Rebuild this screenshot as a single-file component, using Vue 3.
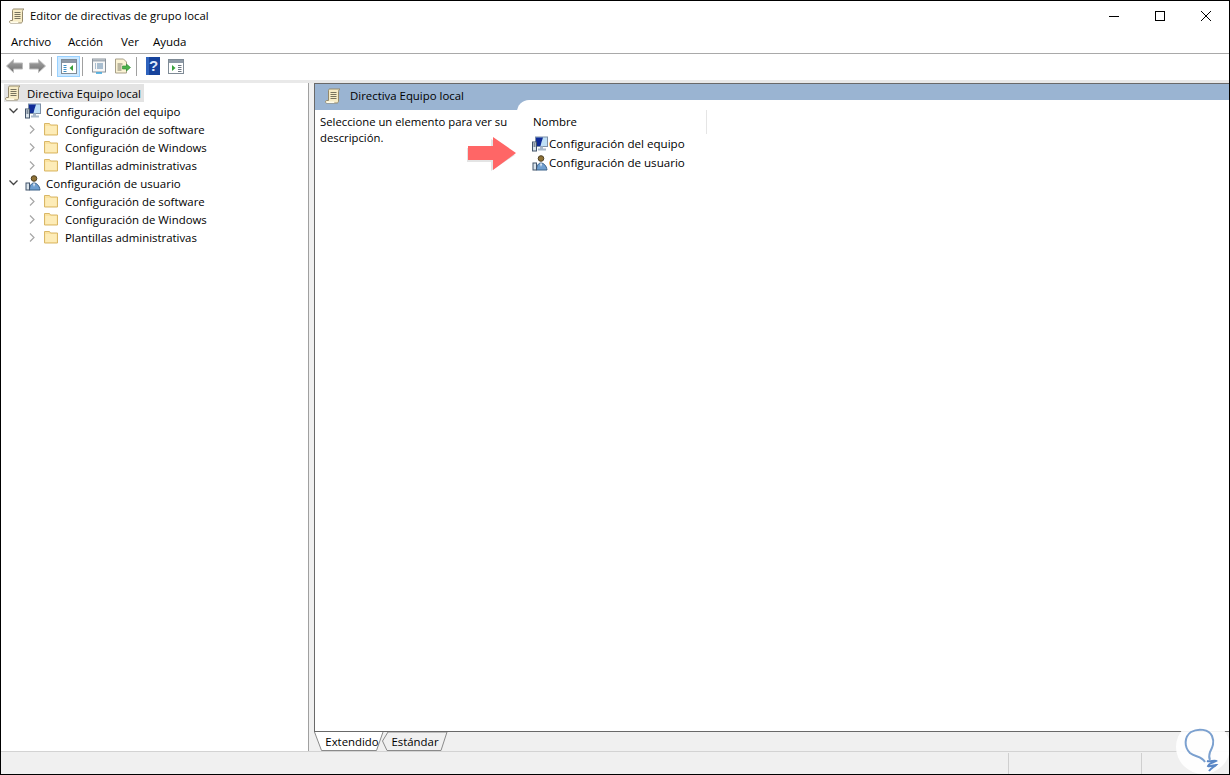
<template>
  <div class="window">
    <svg class="defs" width="0" height="0">
      <defs>
        <linearGradient id="arrow-fill" x1="0" y1="0" x2="0" y2="1">
          <stop offset="0" stop-color="#a9a9a9" />
          <stop offset="1" stop-color="#6e6e6e" />
        </linearGradient>
        <symbol id="scroll" viewBox="0 0 16 16">
          <path d="M4.500 1h10.500c-.8.600-1.500 1.500-1.500 2.500V13c0 1-.6 2-1.500 2H1.800C.8 15 .5 14.300.5 13.700c0-.8.700-1.200 1.500-1.200h1.500V3c0-1 .3-2 1-2z" fill="#f7ecc6" stroke="#94896c" />
          <path d="M1.500 13.500h7.500c0 .5.200 1 .5 1.500H2c-.8 0-1-1-.5-1.500z" fill="#fffbe9" />
          <path d="M5.500 4.500h6M5.500 6.500h6M5.500 8.500h6M5.500 10.500h6" stroke="#77735f" />
        </symbol>
        <symbol id="computer" viewBox="0 0 16 16">
          <rect x="3.500" y="1" width="12" height="9.500" fill="#bfe0f7" stroke="#7d8fa6" />
          <path d="M4 1.500h7L9.500 6 8.500 10H4z" fill="#0f2b97" />
          <path d="M8 10.500h3v2h3v2H6v-2h2z" fill="#a9b9c9" />
          <rect x=".5" y="6" width="4" height="9" fill="#dbe5ec" stroke="#43546b" />
          <path d="M1.500 8h2M1.500 10h2" stroke="#1f2e44" />
        </symbol>
        <symbol id="user" viewBox="0 0 16 16">
          <circle cx="9" cy="3.500" r="2.800" fill="#8f7236" stroke="#4e4022" />
          <path d="M4.500 15c0-4.500 2-7 4.500-7s5.500 2.500 6 7z" fill="#6f9fd0" stroke="#3c6289" />
          <rect x="1" y="8" width="3.500" height="7" fill="#dbe5ec" stroke="#43546b" />
          <path d="M8 8.500l1 3.500 1.200-3.500z" fill="#eef3f8" />
        </symbol>
        <symbol id="folder" viewBox="0 0 16 16">
          <path d="M1.500 2.500h5l1 1.500h7v10h-13z" fill="#fbe3a0" stroke="#d9b767" />
          <path d="M2.500 5h11v8h-11z" fill="#fdecb8" />
        </symbol>
      </defs>
    </svg>

    <header class="titlebar">
      <svg class="title-icon" width="16" height="16"><use href="#scroll" /></svg>
      <span class="title">Editor de directivas de grupo local</span>
      <div class="controls">
        <svg width="46" height="30" viewBox="0 0 46 30"><path d="M18 15.500h10" stroke="#000" /></svg>
        <svg width="46" height="30" viewBox="0 0 46 30"><rect x="18.500" y="10.500" width="9" height="9" fill="none" stroke="#000" /></svg>
        <svg width="46" height="30" viewBox="0 0 46 30"><path d="M18 10l10 10M28 10L18 20" stroke="#000" /></svg>
      </div>
    </header>

    <nav class="menubar">
      <span v-for="item in menu" :key="item">{{ item }}</span>
    </nav>

    <div class="toolbar">
      <svg class="tool" width="17" height="16" viewBox="0 0 17 16"><path d="M.5 8l7-6.500v3.500h9v6h-9v3.500z" fill="url(#arrow-fill)" stroke="#bcbcbc" /></svg>
      <svg class="tool next" width="17" height="16" viewBox="0 0 17 16"><path d="M16.500 8l-7-6.500v3.500h-9v6h9v3.500z" fill="url(#arrow-fill)" stroke="#bcbcbc" /></svg>
      <i class="sep first"></i>
      <button class="btn active">
        <svg width="16" height="15" viewBox="0 0 16 15">
          <rect x=".5" y=".5" width="15" height="14" fill="#fff" stroke="#7f8b96" />
          <path d="M1 1h14v3H1z" fill="#8d99a6" />
          <path d="M2.500 6.500h3M2.500 8.500h3M2.500 10.500h3M2.500 12.500h3" stroke="#3f8fc4" />
          <path d="M12 6v6L8.500 9z" fill="#37a03a" />
        </svg>
      </button>
      <i class="sep second"></i>
      <svg class="tool props" width="16" height="16" viewBox="0 0 16 16">
        <rect x="1.500" y="1" width="13" height="13" fill="#f7f7f7" stroke="#8b939b" />
        <path d="M2 1.500h12v2H2z" fill="#a5aeb7" />
        <path d="M4 6h1M6 6h6M4 8h1M6 8h6M4 10h1M6 10h6" stroke="#5b84a8" />
        <path d="M5 15h6" stroke="#35a3dc" stroke-width="1.500" />
      </svg>
      <svg class="tool export" width="17" height="16" viewBox="0 0 17 16">
        <path d="M1.500 1h8l3 3v11h-11z" fill="#fbf3d4" stroke="#a79f88" />
        <path d="M3.500 6h5M3.500 8h4M3.500 10h4M3.500 12h4" stroke="#7d7a6b" />
        <path d="M16.500 9.500L12.500 6v2h-4v3h4v2z" fill="#4bb34b" stroke="#2d8a30" stroke-width=".6" />
      </svg>
      <i class="sep help-sep"></i>
      <svg class="tool help" width="14" height="18" viewBox="0 0 14 18">
        <rect width="14" height="18" fill="#17439c" />
        <path d="M0 0h3v18H0z" fill="#2f63bd" />
        <text x="7.500" y="14" text-anchor="middle" class="help-mark">?</text>
      </svg>
      <svg class="tool last" width="16" height="15" viewBox="0 0 16 15">
        <rect x=".5" y=".5" width="15" height="14" fill="#fff" stroke="#7f8b96" />
        <path d="M1 1h14v3H1z" fill="#8d99a6" />
        <path d="M10 6.500h3.500M10 8.500h3.500M10 10.500h3.500M10 12.500h3.500" stroke="#6d7680" />
        <path d="M4 6v6L7.500 9z" fill="#37a03a" />
      </svg>
    </div>

    <main class="workspace">
      <aside class="tree">
        <div class="root">
          <svg width="16" height="16"><use href="#scroll" /></svg>
          <span>Directiva Equipo local</span>
        </div>
        <template v-for="group in groups" :key="group.name">
          <div class="row group">
            <svg class="chevron" width="9" height="6" viewBox="0 0 9 6"><path d="M.5.500l4 4 4-4" fill="none" stroke="#444" stroke-width="1.300" /></svg>
            <svg class="row-icon" width="16" height="16"><use :href="group.icon" /></svg>
            <span>{{ group.name }}</span>
          </div>
          <div v-for="child in children" :key="child" class="row child">
            <svg class="chevron" width="6" height="9" viewBox="0 0 6 9"><path d="M.5.500l4 4-4 4" fill="none" stroke="#a6a6a6" stroke-width="1.200" /></svg>
            <svg class="row-icon" width="16" height="16"><use href="#folder" /></svg>
            <span>{{ child }}</span>
          </div>
        </template>
      </aside>

      <section class="details">
        <div class="frame">
          <div class="pane-head">
            <svg width="16" height="16"><use href="#scroll" /></svg>
            <span>Directiva Equipo local</span>
          </div>
          <div class="pane-body">
            <p class="description">Seleccione un elemento para ver su descripción.</p>
            <div class="list">
              <div class="col-head"><span>Nombre</span></div>
              <div v-for="group in groups" :key="group.name" class="list-row">
                <svg width="16" height="16"><use :href="group.icon" /></svg>
                <span>{{ group.name }}</span>
              </div>
            </div>
            <svg class="arrow" width="52" height="36" viewBox="0 0 52 36">
              <path d="M2 11h24V2l24 16-24 16v-9H2z" fill="#c9c9c9" opacity=".5" transform="translate(-1 1)" />
              <path d="M2 10h25V1l23 16-23 17v-10H2z" fill="#ff6666" />
            </svg>
          </div>
        </div>
        <div class="tabs">
          <div class="tab on">
            <svg width="70" height="19" viewBox="0 0 70 19"><path d="M.5 0l7 18.500h55L69 0" fill="#fff" stroke="#8a8a8a" /></svg>
            <span>Extendido</span>
          </div>
          <div class="tab">
            <svg width="66" height="19" viewBox="0 0 66 19"><path d="M.5 9L6 0h59l-6 18.500H5z" fill="#f0f0f0" stroke="#8a8a8a" /></svg>
            <span>Estándar</span>
          </div>
        </div>
      </section>
    </main>

    <footer class="statusbar">
      <i></i>
      <i></i>
    </footer>

    <div class="watermark">
      <svg width="54" height="54" viewBox="0 0 54 54">
        <circle cx="27" cy="27" r="27" fill="#fff" opacity=".92" />
        <path d="M29 42c-3-6-10-5-15-9-6-6-6-16 1-21 7-4 18-3 21 4 3 7 0 12-2 16-1 3-1 6 0 8" fill="none" stroke="#7ba0cf" stroke-width="2" />
        <path d="M31 41c3 1 7-1 9 0-3 2-7 2-8 5 2 1 6-1 8-1-2 2-5 3-7 6" fill="none" stroke="#5a87c6" stroke-width="2" />
      </svg>
    </div>
  </div>
</template>

<script setup>
const menu = ['Archivo', 'Acción', 'Ver', 'Ayuda']

const groups = [
  { name: 'Configuración del equipo', icon: '#computer' },
  { name: 'Configuración de usuario', icon: '#user' }
]

const children = [
  'Configuración de software',
  'Configuración de Windows',
  'Plantillas administrativas'
]
</script>

<style scoped>
.window {
  position: relative;
  width: 1230px;
  height: 775px;
  box-sizing: border-box;
  display: flex;
  flex-direction: column;
  overflow: hidden;
  background: #fff;
  border: 1px solid #000;
  font-family: "Open Sans", "Liberation Sans", sans-serif;
  font-size: 11.4px;
  color: #000;
}
.defs {
  position: absolute;
}
svg {
  flex: none;
  display: block;
}
.titlebar {
  flex: none;
  height: 29px;
  display: flex;
  align-items: center;
  padding-left: 8px;
}
.title {
  margin-left: 5px;
  font-size: 11.3px;
}
.controls {
  margin-left: auto;
  display: flex;
}
.menubar {
  flex: none;
  height: 23px;
  display: grid;
  grid-template-columns: 57px 53px 32px auto;
  align-items: center;
  padding-left: 10px;
  border-bottom: 1px solid #a9a9a9;
  font-size: 11.5px;
}
.toolbar {
  flex: none;
  height: 26px;
  box-sizing: border-box;
  display: flex;
  align-items: center;
  padding: 0 0 2px 5px;
}
.next {
  margin-left: 6px;
}
.sep {
  width: 1px;
  height: 19px;
  background: #a0a0a0;
}
.first {
  margin-left: 5px;
}
.btn {
  width: 23px;
  height: 21px;
  margin-left: 5px;
  padding: 0;
  display: flex;
  align-items: center;
  justify-content: center;
  border: 1px solid #99d1ff;
  background: #cce8ff;
}
.second {
  margin-left: 2px;
}
.props {
  margin-left: 8px;
}
.export {
  margin-left: 7px;
}
.help-sep {
  margin-left: 5px;
}
.help {
  margin-left: 9px;
}
.last {
  margin-left: 8px;
}
.help-mark {
  font-family: "Liberation Sans", sans-serif;
  font-size: 15px;
  font-weight: 700;
  fill: #dfe9fb;
}
.workspace {
  flex: 1;
  min-height: 0;
  display: flex;
  background: #f0f0f0;
  border-top: 3px solid #e9e9e9;
}
.tree {
  width: 308px;
  flex: none;
  box-sizing: border-box;
  background: #fff;
  border-right: 1px solid #a0a0a0;
  padding: 1px 0 0 3px;
}
.root {
  display: flex;
  width: fit-content;
  align-items: center;
  gap: 6px;
  height: 18px;
  padding: 0 3px 0 1px;
  background: #e3e3e3;
}
.row {
  height: 18px;
  display: flex;
  align-items: center;
  padding-left: 5px;
}
.row.group {
  font-size: 11.5px;
}
.row .chevron {
  width: 9px;
}
.row .row-icon {
  margin-left: 7px;
}
.row span {
  margin-left: 5px;
}
.row.child {
  padding-left: 24px;
}
.row.child .row-icon {
  margin-left: 6px;
}
.row.child span {
  margin-left: 6px;
}
.details {
  flex: 1;
  min-width: 0;
  display: flex;
  flex-direction: column;
  margin-left: 5px;
}
.frame {
  flex: 1;
  min-height: 0;
  display: flex;
  flex-direction: column;
  background: #fff;
  border-top: 1px solid #696969;
  border-left: 1px solid #696969;
  border-bottom: 1px solid #696969;
}
.pane-head {
  flex: none;
  height: 26px;
  box-sizing: border-box;
  display: flex;
  align-items: center;
  gap: 9px;
  padding: 0 0 3px 10px;
  background: #9ab4d2;
}
.pane-body {
  position: relative;
  flex: 1;
  display: grid;
  grid-template-columns: 202px 1fr;
}
.description {
  margin: 0;
  padding: 4px 0 0 5px;
  line-height: 16px;
  font-size: 11.3px;
}
.list {
  margin-top: -10px;
  background: #fff;
  border-top-left-radius: 12px;
  padding: 10px 0 0 15px;
}
.col-head {
  width: 175px;
  height: 24px;
  box-sizing: border-box;
  padding: 4px 0 0 1px;
  border-right: 1px solid #e5e5e5;
}
.list-row {
  display: flex;
  align-items: center;
  gap: 1px;
  height: 19px;
  font-size: 11.6px;
}
.arrow {
  position: absolute;
  left: 151px;
  top: 26px;
}
.tabs {
  flex: none;
  height: 19px;
  display: flex;
}
.tab {
  position: relative;
  width: 66px;
  display: flex;
  align-items: center;
  justify-content: center;
}
.tab svg {
  position: absolute;
  left: 0;
  top: 0;
}
.tab span {
  position: relative;
}
.tab.on {
  width: 68px;
  padding-left: 8px;
  box-sizing: border-box;
}
.statusbar {
  flex: none;
  height: 22px;
  display: flex;
  background: #f0f0f0;
  border-top: 1px solid #d3d3d3;
}
.statusbar i {
  border-left: 1px solid #cfcfcf;
  margin-top: 1px;
}
.statusbar i:nth-child(1) {
  margin-left: 1007px;
  width: 132px;
}
.watermark {
  position: absolute;
  right: -1px;
  bottom: 0;
}
</style>

<style>
html, body {
  margin: 0;
  background: #fff;
}
</style>
